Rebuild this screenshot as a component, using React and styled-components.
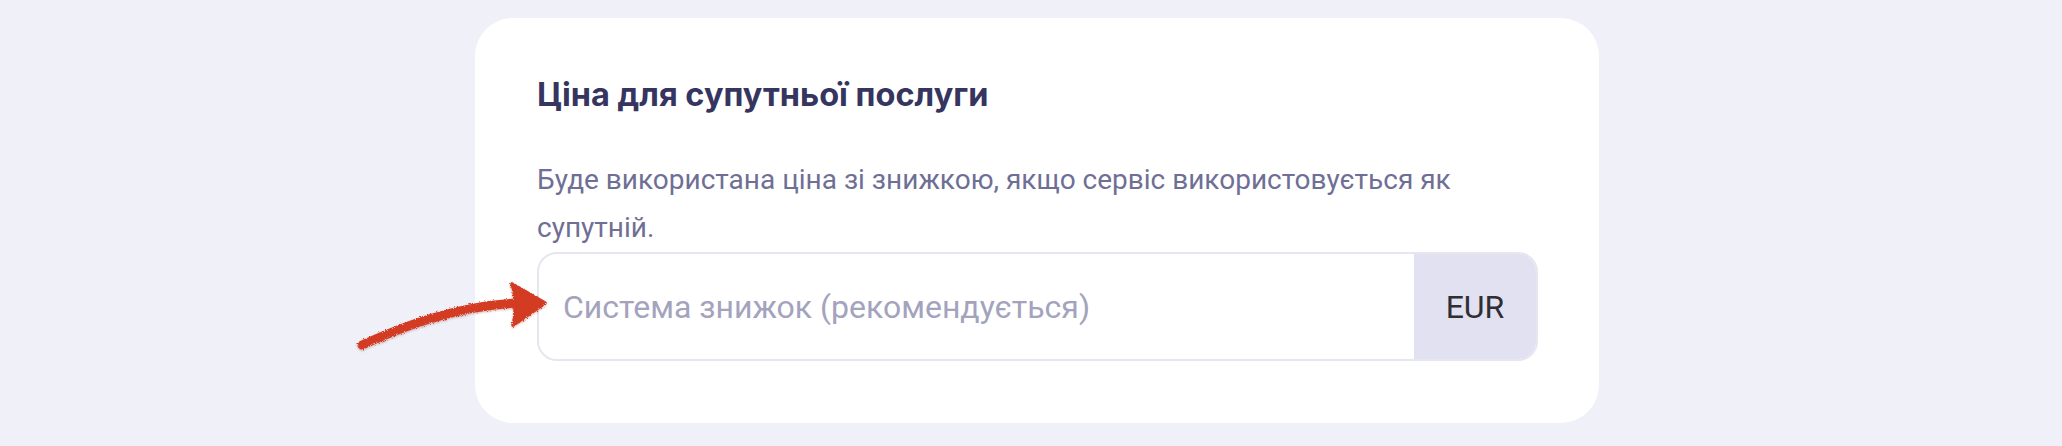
import React from 'react';
import styled, { createGlobalStyle } from 'styled-components';

const GlobalStyle = createGlobalStyle`
  html, body {
    margin: 0;
    padding: 0;
    background: #f0f0f8;
  }
  * {
    box-sizing: border-box;
  }
`;

const Page = styled.div`
  position: relative;
  min-height: 446px;
  padding: 18px 0 0 475px;
`;

const Card = styled.section`
  width: 1124px;
  background: #ffffff;
  border-radius: 38px;
  padding: 58px 61px 62px 62px;
`;

const Title = styled.h2`
  margin: 0 0 42px;
  font-family: Inter, 'Noto Sans', sans-serif;
  font-weight: 700;
  font-size: 32.5px;
  line-height: 38px;
  color: #35355f;
`;

const Hint = styled.p`
  margin: 0;
  font-family: Roboto, 'Noto Sans', sans-serif;
  font-size: 28px;
  line-height: 48px;
  color: #6f6f96;
`;

const Field = styled.div`
  display: flex;
  height: 109px;
  border: 2px solid #e6e6ef;
  border-radius: 20px;
  overflow: hidden;
`;

const PriceInput = styled.input`
  flex: 1;
  min-width: 0;
  border: none;
  outline: none;
  background: transparent;
  padding: 0 24px;
  font-family: Roboto, 'Noto Sans', sans-serif;
  font-size: 32px;
  color: #333;

  &::placeholder {
    color: #a3a3be;
  }
`;

const Currency = styled.div`
  display: flex;
  align-items: center;
  justify-content: center;
  width: 122px;
  background: #e2e1f2;
  font-family: Roboto, 'Noto Sans', sans-serif;
  font-size: 32px;
  color: #2f2f33;
`;

const Pointer = styled.svg`
  position: absolute;
  left: 350px;
  top: 270px;
  width: 210px;
  height: 90px;
  overflow: visible;
  pointer-events: none;
`;

// hand-drawn marker arrow pointing at the field
const MarkerArrow = () => (
  <Pointer viewBox="0 0 210 90">
    <defs>
      <filter id="chalk" x="-10%" y="-20%" width="120%" height="140%">
        <feTurbulence type="fractalNoise" baseFrequency="1.1" numOctaves="2" seed="5" />
        <feDisplacementMap in="SourceGraphic" scale="3.5" result="rough" />
        <feDropShadow dx="0" dy="1" stdDeviation="0.8" floodColor="#7a2a1a" floodOpacity="0.35" />
      </filter>
    </defs>
    <g filter="url(#chalk)" fill="#d33a22" stroke="#d33a22" strokeLinecap="round" strokeLinejoin="round">
      <path d="M12 75 C52 57 102 37 166 33" fill="none" strokeWidth="9" />
      <path d="M162 14 L195 33 L163 55 C166 45 166 25 162 14 Z" strokeWidth="3.5" />
    </g>
  </Pointer>
);

const App = () => (
  <>
    <GlobalStyle />
    <Page>
      <Card>
        <Title>Ціна для супутньої послуги</Title>
        <Hint>Буде використана ціна зі знижкою, якщо сервіс використовується як супутній.</Hint>
        <Field>
          <PriceInput placeholder="Система знижок (рекомендується)" />
          <Currency>EUR</Currency>
        </Field>
      </Card>
      <MarkerArrow />
    </Page>
  </>
);

export default App;
